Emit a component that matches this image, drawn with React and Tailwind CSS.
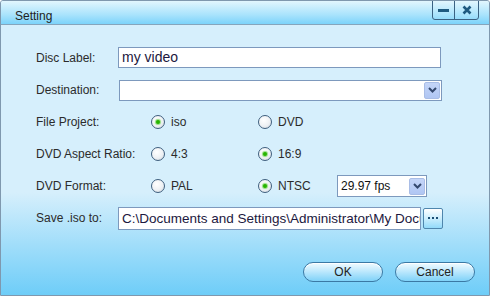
import React, { useState } from 'react';

const font = { fontFamily: '"Liberation Sans", Arial, sans-serif' };

function Radio({ checked, onClick, label }) {
  return (
    <div className="flex items-center cursor-pointer" onClick={onClick}>
      <span className="w-[14px] h-[14px] rounded-full border border-[#3f5f7e] bg-[radial-gradient(circle_at_40%_35%,#ffffff_0%,#eef1f4_55%,#c9d2db_100%)] flex items-center justify-center">
        {checked && <span className="w-[4px] h-[4px] rounded-full bg-[#27b400] shadow-[0_0_1px_1px_#8fdc7a]" />}
      </span>
      <span className="ml-[6px] text-[12px] text-[#2b2b2b]">{label}</span>
    </div>
  );
}

function Chevron() {
  return (
    <svg width="9" height="6" viewBox="0 0 9 6">
      <path d="M1 1 L4.5 4.5 L8 1" fill="none" stroke="#34486e" strokeWidth="2" />
    </svg>
  );
}

function DropButton() {
  return (
    <span className="w-[16px] h-[17px] rounded-[2px] bg-[linear-gradient(#c4d5f8,#b0c6f3)] border border-[#a9bde6] flex items-center justify-center">
      <Chevron />
    </span>
  );
}

function Row({ label, children, h = 'h-[32px]' }) {
  return (
    <div className={`flex items-center ${h}`}>
      <div className="w-[82px] text-[12px] text-[#2b2b2b] whitespace-nowrap">{label}</div>
      <div className="flex items-center flex-1">{children}</div>
    </div>
  );
}

export default function App() {
  const [project, setProject] = useState('iso');
  const [aspect, setAspect] = useState('16:9');
  const [format, setFormat] = useState('NTSC');

  return (
    <div style={font} className="w-[490px] h-[296px] flex flex-col border border-[#7f98ae] rounded-t-[3px] overflow-hidden bg-[#d6effc]">
      {/* title bar */}
      <div className="h-[24px] flex items-start justify-between border-b border-[#86a5bc] bg-[linear-gradient(#e2f6fe,#a9e3fc_60%,#7cd3fa)]">
        <span className="ml-[14px] mt-[6px] text-[12px] text-[#222]">Setting</span>
        <div className="mr-[10px] -mt-px flex h-[20px] border border-[#3a6283] rounded-b-[3px]">
          <div className="w-[22px] flex items-center justify-center border-r border-[#3a6283]">
            <span className="w-[11px] h-[3px] bg-[#1e5a80]" />
          </div>
          <div className="w-[23px] flex items-center justify-center">
            <svg width="10" height="10" viewBox="0 0 10 10">
              <path d="M1.5 1.5 L8.5 8.5 M8.5 1.5 L1.5 8.5" stroke="#1e5a80" strokeWidth="2.6" />
            </svg>
          </div>
        </div>
      </div>

      {/* body */}
      <div className="flex-1 flex flex-col pl-[35px] pt-[16px] bg-[linear-gradient(#d6effc_0%,#d6effc_62%,#6ecdf8_100%)]">
        <Row label="Disc Label:" h="h-[33px]">
          <input
            defaultValue="my video"
            className="w-[323px] h-[21px] border border-[#7d99bd] bg-white px-[3px] text-[14px] text-[#1c1840] outline-none"
          />
        </Row>
        <Row label="Destination:">
          <div className="ml-px w-[323px] h-[21px] border border-[#7d99bd] bg-white flex items-center justify-end pr-px">
            <DropButton />
          </div>
        </Row>
        <Row label="File Project:">
          <div className="ml-[33px] w-[107px]">
            <Radio label="iso" checked={project === 'iso'} onClick={() => setProject('iso')} />
          </div>
          <Radio label="DVD" checked={project === 'DVD'} onClick={() => setProject('DVD')} />
        </Row>
        <Row label="DVD Aspect Ratio:">
          <div className="ml-[33px] w-[107px]">
            <Radio label="4:3" checked={aspect === '4:3'} onClick={() => setAspect('4:3')} />
          </div>
          <Radio label="16:9" checked={aspect === '16:9'} onClick={() => setAspect('16:9')} />
        </Row>
        <Row label="DVD Format:">
          <div className="ml-[33px] w-[107px]">
            <Radio label="PAL" checked={format === 'PAL'} onClick={() => setFormat('PAL')} />
          </div>
          <div className="w-[79px]">
            <Radio label="NTSC" checked={format === 'NTSC'} onClick={() => setFormat('NTSC')} />
          </div>
          <div className="w-[90px] h-[22px] border border-[#7d99bd] bg-white flex items-center justify-between pl-[3px] pr-px">
            <span className="text-[12px] text-[#111]">29.97 fps</span>
            <DropButton />
          </div>
        </Row>
        <Row label="Save .iso to:">
          <input
            readOnly
            value="C:\Documents and Settings\Administrator\My Documents"
            className="w-[303px] h-[23px] border border-[#7d99bd] bg-white pl-[3px] pr-0 text-[13.5px] text-[#1c1840] outline-none"
          />
          <button className="ml-[2px] w-[20px] h-[21px] rounded-[2px] border border-[#4f86ad] bg-[linear-gradient(#ffffff,#cbeefd_50%,#93dafa)] flex items-center justify-center gap-[2px]">
            <span className="w-[2px] h-[2px] bg-[#1b4e74]" />
            <span className="w-[2px] h-[2px] bg-[#1b4e74]" />
            <span className="w-[2px] h-[2px] bg-[#1b4e74]" />
          </button>
        </Row>

        <div className="flex-1" />
        <div className="flex justify-end gap-[12px] pr-[14px] pb-[13px]">
          {['OK', 'Cancel'].map((t) => (
            <button
              key={t}
              className="w-[80px] h-[20px] rounded-full border border-[#3b79a4] bg-[linear-gradient(#f1fbff,#bfe9fd_45%,#7fd2f8)] shadow-[inset_0_1px_0_#ffffff] text-[12px] text-[#222] leading-[18px]"
            >
              {t}
            </button>
          ))}
        </div>
      </div>
    </div>
  );
}
